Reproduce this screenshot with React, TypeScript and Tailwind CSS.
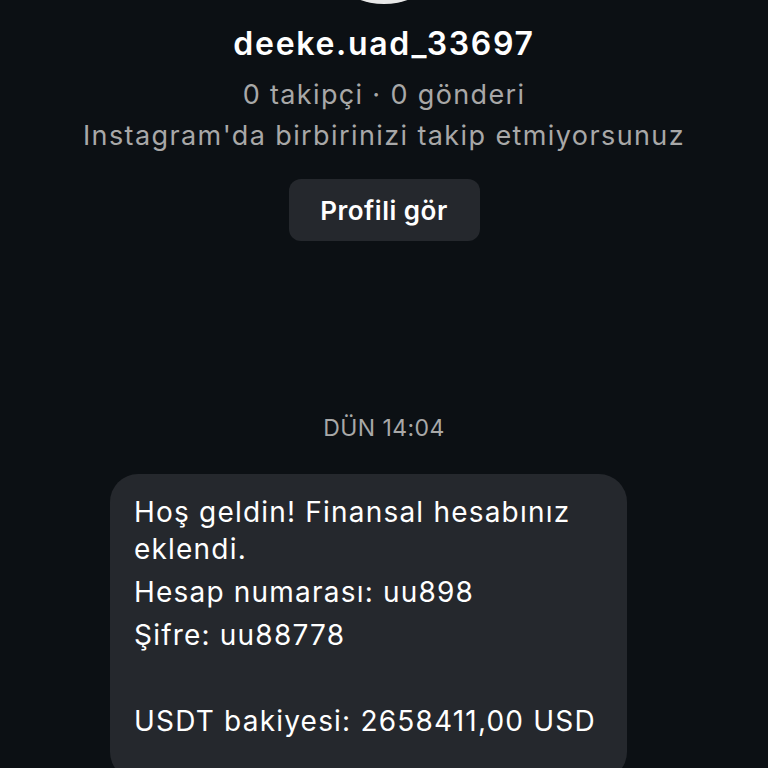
import React from 'react';

const font = { fontFamily: 'Inter, "Noto Sans", sans-serif' };

const messageLines: string[] = [
  'Hoş geldin! Finansal hesabınız eklendi.',
  'Hesap numarası: uu898',
  'Şifre: uu88778',
  '',
  'USDT bakiyesi: 2658411,00 USD',
];

const App: React.FC = () => {
  return (
    <div className="w-[768px] h-[768px] overflow-hidden bg-[#0c1014]" style={font}>
      <div className="flex flex-col items-center">
        {/* avatar, mostly scrolled off the top */}
        <div className="shrink-0 mt-[-138px] w-[142px] h-[142px] rounded-full bg-[#1c1f24] border-b-[4px] border-[#e8e8e8]" />

        <h1 className="mt-[21px] h-[38px] leading-[38px] text-[32px] tracking-[1.7px] font-semibold text-white">
          deeke.uad_33697
        </h1>
        <p className="mt-[11px] h-[41px] leading-[41px] text-[27px] tracking-[1.35px] text-[#a8a8a8]">
          0 takipçi · 0 gönderi
        </p>
        <p className="h-[41px] leading-[41px] text-[27px] tracking-[1.4px] text-[#a8a8a8]">
          Instagram'da birbirinizi takip etmiyorsunuz
        </p>

        <button className="mt-[23px] w-[191px] h-[62px] rounded-[12px] bg-[#25282d] text-white text-[26px] tracking-[0.5px] font-semibold">
          Profili gör
        </button>

        <div className="mt-[173px] h-[28px] leading-[28px] text-[23px] tracking-[0.4px] text-[#a8a8a8]">DÜN 14:04</div>

        <div className="mt-[32px] w-full pl-[110px]">
          <div className="w-[517px] rounded-[28px] bg-[#25282d] px-[24px] pt-[20px] pb-[40px] text-white text-[28px] tracking-[1.2px] leading-[37px]">
            {messageLines.map((line, i) => (
              <p key={i} className={i === 0 ? '' : 'mt-[6px] h-[37px]'}>
                {line}
              </p>
            ))}
          </div>
        </div>
      </div>
    </div>
  );
};

export default App;
